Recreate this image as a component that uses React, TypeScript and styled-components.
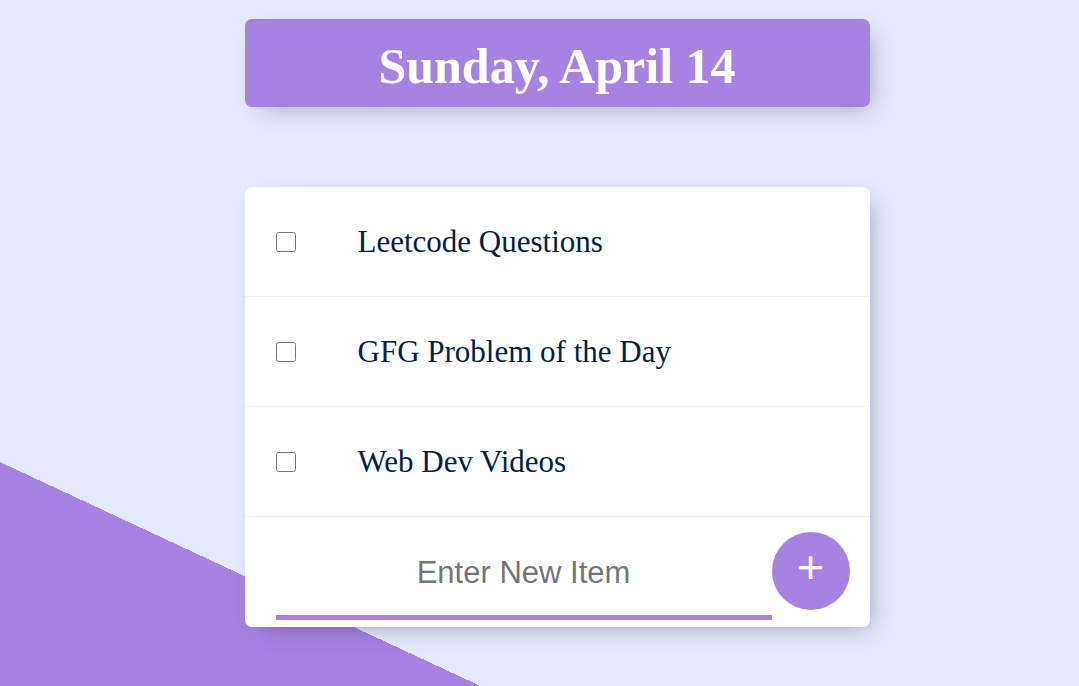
import React from "react";
import styled, { createGlobalStyle } from "styled-components";

const purple = "#A683E3";

const GlobalStyle = createGlobalStyle`
  html {
    height: 100%;
    background-color: #E4E9FD;
    background-image: linear-gradient(25deg, ${purple} 203px, #E4E9FD 203px);
    background-attachment: fixed;
  }
  body {
    margin: 0;
    font-family: "Liberation Serif", "Times New Roman", serif;
  }
`;

const Page = styled.div`
  padding: 19px 0 0 35px;
  box-sizing: border-box;
`;

const Box = styled.div`
  width: 625px;
  margin: 0 auto 80px;
  background: white;
  border-radius: 7px;
  box-shadow: 8px 8px 23px -8px rgba(0, 0, 0, 0.3);
  overflow: hidden;
`;

const Heading = styled(Box)`
  background-color: ${purple};
  text-align: center;
`;

const Title = styled.h1`
  margin: 0;
  padding: 18px 15px 12px;
  font-size: 50px;
  line-height: 58px;
  font-weight: bold;
  color: #fff;
`;

const Item = styled.div`
  min-height: 109px;
  display: flex;
  align-items: center;
  border-bottom: 1px solid #f1f1f1;
`;

const Check = styled.input`
  width: 20px;
  height: 20px;
  margin: 0 31px 0 31px;
  flex: none;
`;

const Label = styled.p`
  margin: 0;
  padding: 0 31px;
  font-size: 31px;
  font-weight: 200;
  color: #00204a;
`;

const Form = styled.form`
  display: flex;
  align-items: center;
  margin-left: 31px;
  padding: 9px 0 7px;
`;

const TextInput = styled.input`
  width: 496px;
  height: 94px;
  box-sizing: border-box;
  border: none;
  background: transparent;
  text-align: center;
  font-family: "Liberation Sans", Arial, sans-serif;
  font-size: 31px;
  font-weight: 200;
  box-shadow: inset 0 -5px 0 0 ${purple};
  outline: none;
  &::placeholder {
    color: #757575;
  }
`;

const AddButton = styled.button`
  width: 78px;
  height: 78px;
  border-radius: 50%;
  border: 0;
  background-color: ${purple};
  color: #fff;
  font-family: "Liberation Sans", Arial, sans-serif;
  font-size: 47px;
  line-height: 1;
  padding: 0 0 9px;
  margin-bottom: 4px;
  flex: none;
`;

const items = ["Leetcode Questions", "GFG Problem of the Day", "Web Dev Videos"];

export default function App() {
  return (
    <>
      <GlobalStyle />
      <Page>
        <Heading>
          <Title>Sunday, April 14</Title>
        </Heading>
        <Box>
          {items.map((text) => (
            <Item key={text}>
              <Check type="checkbox" />
              <Label>{text}</Label>
            </Item>
          ))}
          <Form onSubmit={(e) => e.preventDefault()}>
            <TextInput type="text" placeholder="Enter New Item" autoComplete="off" />
            <AddButton type="submit">+</AddButton>
          </Form>
        </Box>
      </Page>
    </>
  );
}
